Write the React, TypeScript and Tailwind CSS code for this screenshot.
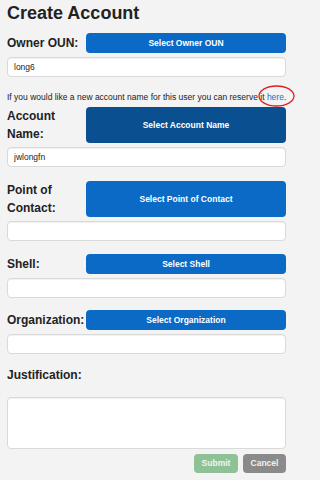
import React from 'react';

const inputCls =
  'block w-full h-[20px] rounded-[4px] border border-[#d9d9d9] bg-white px-[6px] text-[8.5px] text-[#222] shadow-[inset_0_1px_1px_rgba(0,0,0,0.06)] outline-none';

function Field({
  label,
  button,
  value = '',
  dark = false,
}: {
  label: string;
  button: string;
  value?: string;
  dark?: boolean;
}) {
  return (
    <div>
      <div className="flex items-stretch">
        <div className="w-[79px] self-center text-[12px] font-bold leading-[18px] text-[#222]">
          {label}
        </div>
        <button
          className={
            'flex-1 min-h-[20px] rounded-[4px] text-[8.5px] font-bold text-white ' +
            (dark ? 'bg-[#0a4f8f]' : 'bg-[#0a6ac6]')
          }
        >
          {button}
        </button>
      </div>
      <input className={inputCls + ' mt-[4px]'} defaultValue={value} readOnly />
    </div>
  );
}

export default function App() {
  return (
    <div className="min-h-[480px] w-full bg-[#f3f3f3]">
      <div
        className="w-[296px] overflow-hidden pl-[7px] pr-[10px] pt-[2px]"
        style={{ fontFamily: '"Liberation Sans", Arial, sans-serif' }}
      >
        <h1 className="text-[18px] font-bold leading-[22px] text-[#222]">Create Account</h1>

        <div className="mt-[9px]">
          <Field label="Owner OUN:" button="Select Owner OUN" value="long6" />
        </div>

        <p className="relative mt-[14px] text-[8.5px] leading-[12px] text-[#222] whitespace-nowrap">
          If you would like a new account name for this user you can reserve it{' '}
          <span className="text-[#1a6fc4]">here</span>.
          <svg
            className="absolute left-[251px] top-[-6px] h-[22px] w-[37px] overflow-visible"
            viewBox="0 0 37 22"
          >
            <ellipse cx="18.5" cy="11" rx="17.5" ry="10" fill="none" stroke="#e02020" strokeWidth="1.3" />
          </svg>
        </p>

        <div className="mt-[4px]">
          <Field label="Account Name:" button="Select Account Name" value="jwlongfn" dark />
        </div>

        <div className="mt-[14px]">
          <Field label="Point of Contact:" button="Select Point of Contact" />
        </div>

        <div className="mt-[13px]">
          <Field label="Shell:" button="Select Shell" />
        </div>

        <div className="mt-[12px]">
          <Field label="Organization:" button="Select Organization" />
        </div>

        <div className="mt-[12px] text-[12px] font-bold leading-[18px] text-[#222]">Justification:</div>

        <textarea
          className="mt-[13px] block h-[52px] w-full resize-none rounded-[4px] border border-[#d9d9d9] bg-white px-[6px] py-[4px] text-[8.5px] shadow-[inset_0_1px_1px_rgba(0,0,0,0.06)] outline-none"
          readOnly
        />

        <div className="mt-[5px] flex justify-end gap-[5px]">
          <button className="h-[19px] w-[44px] rounded-[4px] bg-[#8fc196] text-[8.5px] font-bold text-[#eef6ef]">
            Submit
          </button>
          <button className="h-[19px] w-[43px] rounded-[4px] bg-[#8a8a8a] text-[8.5px] font-bold text-[#f0f0f0]">
            Cancel
          </button>
        </div>
      </div>
    </div>
  );
}
